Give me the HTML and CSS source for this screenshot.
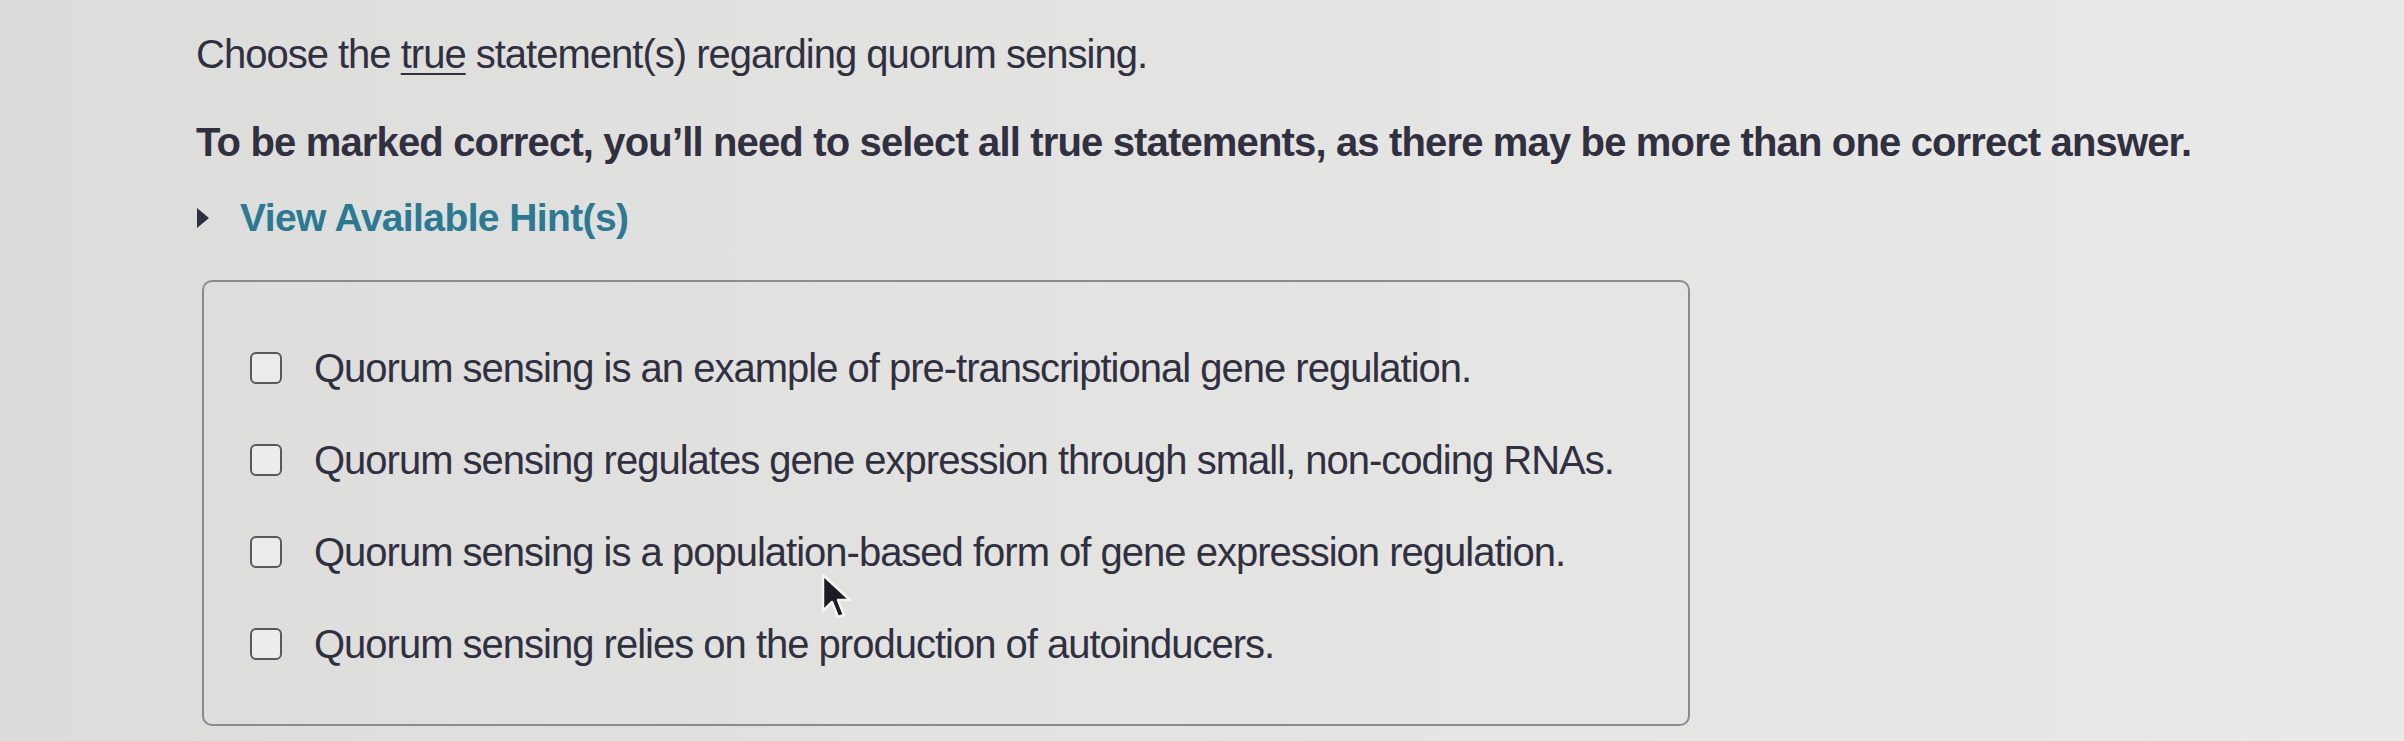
FILE: index.html
```html
<!DOCTYPE html>
<html>
<head>
<meta charset="utf-8">
<link rel="stylesheet" href="styles.css">
</head>
<body>
<main class="page">
  <p class="prompt">Choose the <u>true</u> statement(s) regarding quorum sensing.</p>
  <p class="instruction">To be marked correct, you’ll need to select all true statements, as there may be more than one correct answer.</p>
  <div class="hint">
    <svg class="hint-arrow" width="14" height="22" viewBox="0 0 14 22"><path d="M1 1 L13 11 L1 21 Z" fill="#2c3140"/></svg>
    <span class="hint-label">View Available Hint(s)</span>
  </div>
  <div class="options">
    <label class="option"><span class="box"></span><span class="text">Quorum sensing is an example of pre-transcriptional gene regulation.</span></label>
    <label class="option"><span class="box"></span><span class="text">Quorum sensing regulates gene expression through small, non-coding RNAs.</span></label>
    <label class="option"><span class="box"></span><span class="text">Quorum sensing is a population-based form of gene expression regulation.</span></label>
    <label class="option"><span class="box"></span><span class="text">Quorum sensing relies on the production of autoinducers.</span></label>
  </div>
  <svg class="cursor" width="32" height="50" viewBox="0 0 32 50"><path d="M3 3 L3 39 L12 30 L18 45 L24 43 L18 28 L30 28 Z" fill="#1c1c22" stroke="#f4f4f4" stroke-width="2.5" stroke-linejoin="round"/></svg>
</main>
</body>
</html>
```
FILE: styles.css
```css
html, body {
  margin: 0;
  padding: 0;
}
body {
  width: 2404px;
  height: 741px;
  overflow: hidden;
  background: linear-gradient(90deg, #dcdcdb 0%, #e2e2e1 40%, #e9e9e8 100%);
  font-family: "Liberation Sans", Arial, sans-serif;
  color: #30303e;
}
.page {
  position: relative;
  padding: 30px 0 0 196px;
}
.prompt {
  margin: 0;
  font-size: 40px;
  line-height: 48px;
  letter-spacing: -1px;
}
.prompt u {
  text-decoration-thickness: 2px;
  text-underline-offset: 5px;
}
.instruction {
  margin: 40px 0 0 0;
  font-size: 40px;
  line-height: 48px;
  font-weight: bold;
  letter-spacing: -0.85px;
}
.hint {
  display: flex;
  align-items: center;
  gap: 30px;
  margin-top: 28px;
  height: 48px;
}
.hint-arrow {
  flex: none;
}
.hint-label {
  font-size: 39px;
  font-weight: bold;
  color: #2a7a91;
  letter-spacing: -0.6px;
}
.options {
  margin: 38px 0 0 6px;
  width: 1488px;
  height: 446px;
  box-sizing: border-box;
  border: 2px solid #8a8a92;
  border-radius: 10px;
  padding: 62px 0 0 46px;
  display: flex;
  flex-direction: column;
  gap: 44px;
}
.option {
  display: flex;
  align-items: center;
  gap: 32px;
  height: 48px;
}
.box {
  width: 32px;
  height: 32px;
  box-sizing: border-box;
  border: 2.5px solid #585862;
  border-radius: 6px;
  background: #ececeb;
  flex: none;
}
.text {
  font-size: 40px;
  letter-spacing: -1px;
}
.cursor {
  position: absolute;
  left: 820px;
  top: 572px;
}
```
